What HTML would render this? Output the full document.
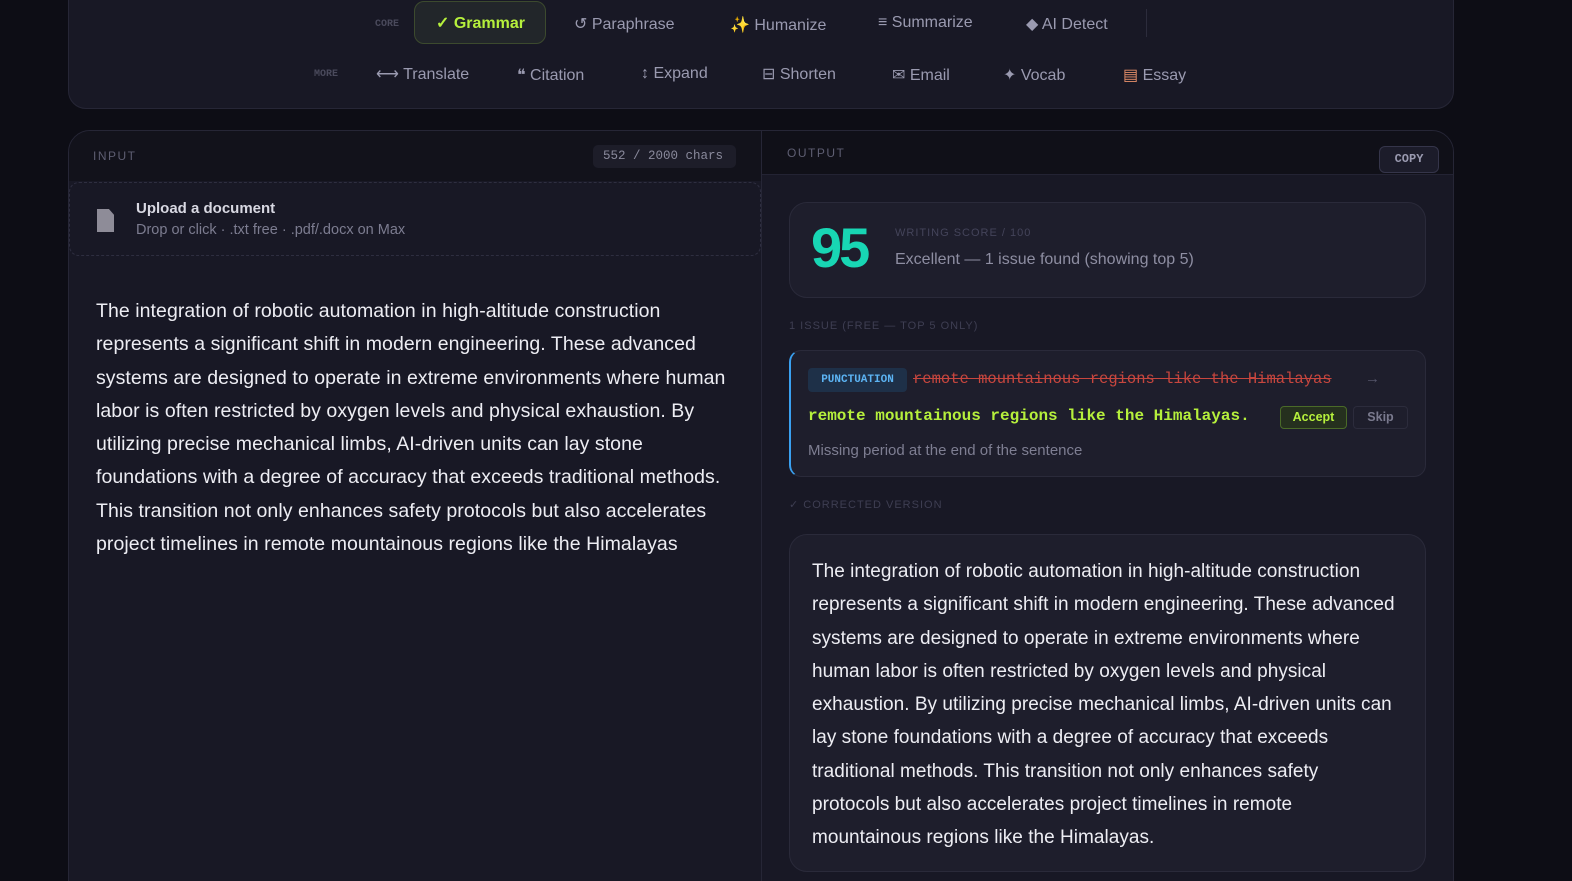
<!DOCTYPE html>
<html><head><meta charset="utf-8"><style>
*{box-sizing:border-box;margin:0;padding:0}
html,body{width:1572px;height:881px;overflow:hidden}
body{background:#0d0d15;font-family:"Liberation Sans",sans-serif;color:#e6e6ee;position:relative}
.top{position:absolute;left:68px;top:-20px;width:1386px;height:129px;background:#181825;border:1px solid #262636;border-radius:18px}
.t{position:absolute;font-size:16px;color:#9a9ab0;white-space:nowrap}
.lbl{position:absolute;font-family:"Liberation Mono",monospace;font-size:10px;color:#4a4a5c;font-weight:bold}
.main{position:absolute;left:68px;top:130px;width:1386px;height:780px;background:#181825;border:1px solid #262636;border-radius:22px;overflow:hidden}
.inhead{position:absolute;left:0;top:0;width:692px;height:50px;background:#12121b}
.outhead{position:absolute;left:693px;top:0;width:693px;height:44px;background:#101018;border-bottom:1px solid #232333}
.div{position:absolute;left:692px;top:0;width:1px;height:780px;background:#262636}
.cap{position:absolute;font-size:12px;letter-spacing:1.5px;color:#5e5e72}
.body{position:absolute;font-size:19.5px;line-height:33.3px;color:#ededf3;white-space:nowrap;letter-spacing:0.06px}
.card{position:absolute;background:#1e1e2c;border:1px solid #2a2a3a;border-radius:18px}
.mono{font-family:"Liberation Mono",monospace}
</style></head><body>
<div class="top">
<div class="lbl" style="left:306px;top:38px">CORE</div>
<div style="position:absolute;left:345px;top:20px;width:132px;height:43px;background:#22262a;border:1px solid #3c4a2e;border-radius:10px"></div>
<div class="t" style="left:367px;top:32px;color:#b6f03c;font-weight:bold;font-size:16px">✓ Grammar</div>
<div class="t" style="left:505px;top:33px">↺ Paraphrase</div>
<div class="t" style="left:661px;top:34px"><span style="color:#f2b84a">✨</span> Humanize</div>
<div class="t" style="left:809px;top:33px">≡ Summarize</div>
<div class="t" style="left:957px;top:33px">◆ AI Detect</div>
<div style="position:absolute;left:1077px;top:28px;width:1px;height:28px;background:#2c2c3c"></div>
<div class="lbl" style="left:245px;top:88px">MORE</div>
<div class="t" style="left:307px;top:83px">⟷ Translate</div>
<div class="t" style="left:448px;top:84px">❝ Citation</div>
<div class="t" style="left:572px;top:84px">↕ Expand</div>
<div class="t" style="left:693px;top:83px">⊟ Shorten</div>
<div class="t" style="left:823px;top:84px">✉ Email</div>
<div class="t" style="left:934px;top:84px">✦ Vocab</div>
<div class="t" style="left:1054px;top:84px"><span style="color:#e8906a">▤</span> Essay</div>
</div>
<div class="main">
<div class="inhead"></div>
<div class="outhead"></div>
<div class="div"></div>
<div class="cap" style="left:24px;top:18px">INPUT</div>
<div class="mono" style="position:absolute;left:524px;top:14px;width:143px;height:23px;background:#1d1d29;border-radius:5px;font-size:12.5px;color:#8a8a9c;padding:4px 0 0 10px">552 / 2000 chars</div>
<div style="position:absolute;left:0;top:51px;width:692px;height:74px;border:1px dashed #2e2e40;border-radius:10px;background:#181825"></div>
<div style="position:absolute;left:28px;top:78px;width:17px;height:23px;background:#8e8c98;clip-path:polygon(0 0,70% 0,100% 25%,100% 100%,0 100%)"></div>
<div style="position:absolute;left:67px;top:69px;font-size:15px;font-weight:bold;color:#d8d8e2">Upload a document</div>
<div style="position:absolute;left:67px;top:91px;font-size:14.5px;color:#7c7c90">Drop or click · .txt free · .pdf/.docx on Max</div>
<div class="body" style="left:27px;top:164px">The integration of robotic automation in high-altitude construction<br>represents a significant shift in modern engineering. These advanced<br>systems are designed to operate in extreme environments where human<br>labor is often restricted by oxygen levels and physical exhaustion. By<br>utilizing precise mechanical limbs, AI-driven units can lay stone<br>foundations with a degree of accuracy that exceeds traditional methods.<br>This transition not only enhances safety protocols but also accelerates<br>project timelines in remote mountainous regions like the Himalayas</div>

<div class="cap" style="left:718px;top:15px">OUTPUT</div>
<div class="mono" style="position:absolute;left:1310px;top:15px;width:60px;height:27px;border:1px solid #35354a;background:#1c1c2a;border-radius:6px;font-size:12px;font-weight:bold;color:#9a9ab0;text-align:center;line-height:25px">COPY</div>
<div class="card" style="left:720px;top:71px;width:637px;height:96px"></div>
<div style="position:absolute;left:742px;top:84px;font-size:56px;font-weight:bold;color:#18d6b4;letter-spacing:-3px">95</div>
<div class="cap" style="left:826px;top:96px;font-size:11px;color:#44445a;letter-spacing:1px">WRITING SCORE / 100</div>
<div style="position:absolute;left:826px;top:120px;font-size:16px;color:#8e8ea2">Excellent — 1 issue found (showing top 5)</div>
<div class="cap" style="left:720px;top:189px;font-size:11px;color:#3e3e52;letter-spacing:1px">1 ISSUE (FREE — TOP 5 ONLY)</div>
<div class="card" style="left:720px;top:219px;width:637px;height:127px;border-left:2px solid #3aa0f0;border-radius:12px"></div>
<div class="mono" style="position:absolute;left:739px;top:237px;width:99px;height:24px;background:#1e3048;border-radius:4px;color:#5cb4f4;font-size:11px;font-weight:bold;text-align:center;line-height:24px">PUNCTUATION</div>
<div class="mono" style="position:absolute;left:844px;top:239px;font-size:15.5px;color:#c8463e;text-decoration:line-through;white-space:nowrap">remote mountainous regions like the Himalayas</div>
<div style="position:absolute;left:1296px;top:239px;font-size:15px;color:#55556a">→</div>
<div class="mono" style="position:absolute;left:739px;top:276px;font-size:16px;font-weight:bold;color:#b6f03c;white-space:nowrap">remote mountainous regions like the Himalayas.</div>
<div style="position:absolute;left:1211px;top:275px;width:67px;height:23px;background:#25301e;border:1px solid #4a6a28;border-radius:4px;color:#b6f03c;font-size:12.5px;font-weight:bold;text-align:center;line-height:21px">Accept</div>
<div style="position:absolute;left:1284px;top:275px;width:55px;height:23px;border:1px solid #2c2c3c;border-radius:4px;color:#7a7a8e;font-size:12.5px;font-weight:bold;text-align:center;line-height:21px">Skip</div>
<div style="position:absolute;left:739px;top:311px;font-size:15px;color:#7e7e92">Missing period at the end of the sentence</div>
<div class="cap" style="left:720px;top:367px;font-size:11px;color:#3e3e52;letter-spacing:1px">✓ CORRECTED VERSION</div>
<div class="card" style="left:720px;top:403px;width:637px;height:338px"></div>
<div class="body" style="left:743px;top:424px;font-size:19px;letter-spacing:0.03px">The integration of robotic automation in high-altitude construction<br>represents a significant shift in modern engineering. These advanced<br>systems are designed to operate in extreme environments where<br>human labor is often restricted by oxygen levels and physical<br>exhaustion. By utilizing precise mechanical limbs, AI-driven units can<br>lay stone foundations with a degree of accuracy that exceeds<br>traditional methods. This transition not only enhances safety<br>protocols but also accelerates project timelines in remote<br>mountainous regions like the Himalayas.</div>
</div>
</body></html>
